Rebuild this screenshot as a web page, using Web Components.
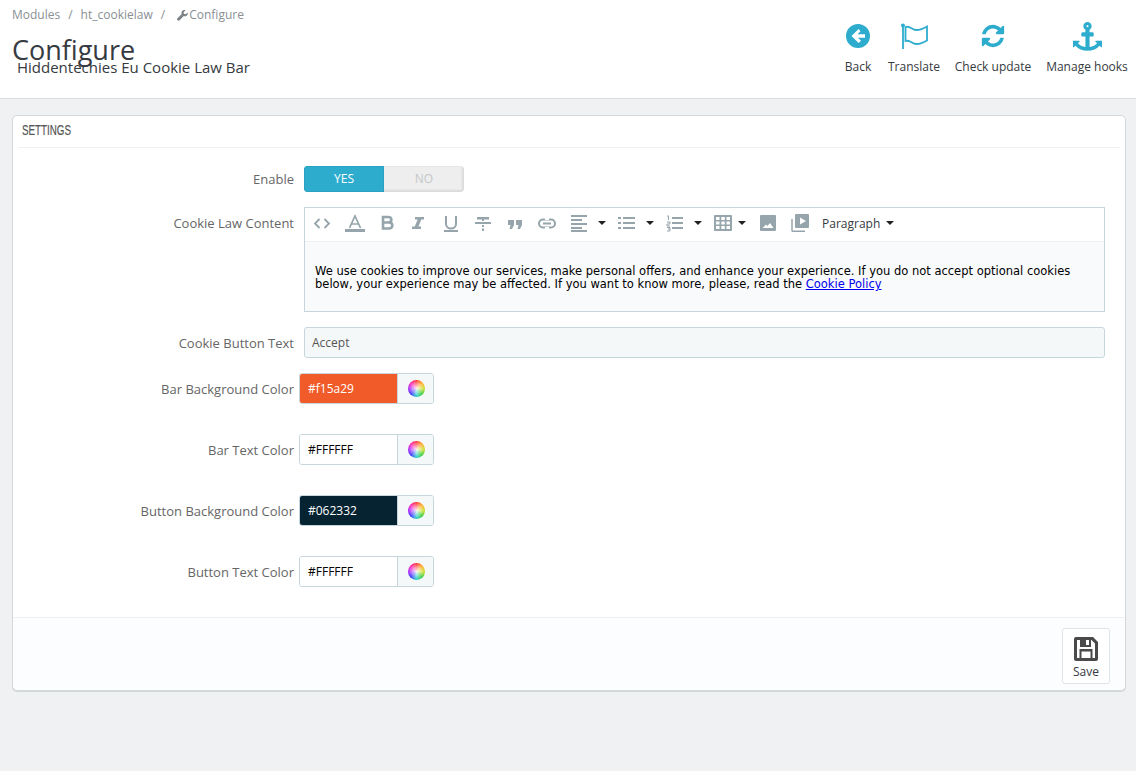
<!DOCTYPE html>
<html lang="en">
<head>
<meta charset="utf-8">
<title>Configure</title>
<style>
  html, body { margin: 0; padding: 0; }
  body {
    background: #eff1f2;
    font-family: "Open Sans", "Liberation Sans", sans-serif;
    font-size: 12px;
    color: #666;
    height: 771px;
    overflow: hidden;
  }
  .color-row { margin-bottom: 15px; }
</style>
</head>
<body>

<page-head>
  <tool-btn label="Back" style="width:52px">
    <svg width="24" height="24" viewBox="0 0 24 24"><path fill="#2eacce" fill-rule="evenodd" d="M12 0a12 12 0 1 1 0 24a12 12 0 0 1 0-24zM12.600 4.900L5.500 12l7.100 7.100l2.400-2.400l-3-3H19v-3.400h-7.500l3-3z"/></svg>
  </tool-btn>
  <tool-btn label="Translate" style="width:60px">
    <svg width="32" height="26" viewBox="0 0 32 26"><path fill="none" stroke="#2eacce" stroke-width="1.800" d="M7.500 4c5-1.500 6 3 11 3c4 0 8-2 10.500-3.500v14c-2.500 1.500-6.500 3.500-10.500 3.500c-5 0-6-4.500-11-3z"/><path fill="none" stroke="#2eacce" stroke-width="1.800" d="M5 2v24"/><circle cx="5" cy="2.500" r="2" fill="#2eacce"/></svg>
  </tool-btn>
  <tool-btn label="Check update" style="width:98px">
    <svg width="26" height="26" viewBox="0 0 1792 1792"><path fill="#2eacce" d="M1639 1056q0 5-1 7-64 268-268 434.500t-478 166.500q-146 0-282.500-55t-243.500-157l-129 129q-19 19-45 19t-45-19-19-45v-448q0-26 19-45t45-19h448q26 0 45 19t19 45-19 45l-137 137q71 66 161 102t187 36q134 0 250-65t186-179q11-17 53-117 8-23 30-23h192q13 0 22.500 9.500t9.500 22.500zm25-800v448q0 26-19 45t-45 19h-448q-26 0-45-19t-19-45 19-45l138-138q-148-137-349-137-134 0-250 65t-186 179q-11 17-53 117-8 23-30 23h-199q-13 0-22.500-9.500t-9.500-22.500v-7q65-268 270-434.500t480-166.500q146 0 284 55.500t245 156.500l130-129q19-19 45-19t45 19 19 45z"/></svg>
  </tool-btn>
  <tool-btn label="Manage hooks" style="width:90px">
    <svg width="29" height="29" viewBox="0 0 1792 1792"><path fill="#2eacce" d="M960 256q0-26-19-45t-45-19-45 19-19 45 19 45 45 19 45-19 19-45zm832 928v352q0 22-20 30-8 2-12 2-12 0-23-9l-93-93q-119 143-318.500 226.500t-429.500 83.500-429.500-83.500-318.500-226.500l-93 93q-9 9-23 9-4 0-12-2-20-8-20-30v-352q0-14 9-23t23-9h352q22 0 30 20 8 19-7 35l-100 100q67 91 189.500 153.500t271.500 82.500v-647h-192q-26 0-45-19t-19-45v-128q0-26 19-45t45-19h192v-163q-58-34-93-92.500t-35-128.500q0-106 75-181t181-75 181 75 75 181q0 70-35 128.500t-93 92.500v163h192q26 0 45 19t19 45v128q0 26-19 45t-45 19h-192v647q149-20 271.500-82.500t189.500-153.500l-100-100q-15-16-7-35 8-20 30-20h352q14 0 23 9t9 23z"/></svg>
  </tool-btn>
</page-head>

<settings-panel heading="SETTINGS">
  <form-row label="Enable" style="--label-top:4px"><yes-no-switch></yes-no-switch></form-row>
  <form-row label="Cookie Law Content"><rich-editor>
    We use cookies to improve our services, make personal offers, and enhance your experience. If you do not accept optional cookies below, your experience may be affected. If you want to know more, please, read the <a href="#" style="color:#00e">Cookie Policy</a>
  </rich-editor></form-row>
  <form-row label="Cookie Button Text"><text-field value="Accept"></text-field></form-row>
  <form-row class="color-row" label="Bar Background Color" style="--shift:-5px"><color-field value="#f15a29" bg="#f15a29" fg="#fff"></color-field></form-row>
  <form-row class="color-row" label="Bar Text Color" style="--shift:-5px"><color-field value="#FFFFFF" bg="#fff" fg="#000"></color-field></form-row>
  <form-row class="color-row" label="Button Background Color" style="--shift:-5px"><color-field value="#062332" bg="#062332" fg="#fff"></color-field></form-row>
  <form-row class="color-row" label="Button Text Color" style="--shift:-5px"><color-field value="#FFFFFF" bg="#fff" fg="#000"></color-field></form-row>
  <save-btn slot="footer"></save-btn>
</settings-panel>

<script>
class PageHead extends HTMLElement {
  connectedCallback() {
    this.attachShadow({ mode: 'open' });
    this.shadowRoot.innerHTML = `
      <style>
        :host { display: flex; justify-content: space-between; height: 98px; background: #fff; border-bottom: 1px solid #d9dcde; }
        .left { padding: 6px 0 0 12px; }
        .crumbs { display: flex; align-items: center; height: 17px; font-size: 12px; color: #8a8f93; }
        .crumbs i { font-style: normal; margin: 0 8px; color: #8a8f93; }
        .crumbs svg { margin: 1px 1px 0 4px; }
        h1 { margin: 10px 0 0; font-size: 27px; line-height: 34px; font-weight: 400; color: #363a41; }
        h4 { margin: -10px 0 0 5px; font-size: 15px; line-height: 20px; font-weight: 400; color: #363a41; }
        .tools { display: flex; align-items: flex-start; padding: 20px 4px 0 0; }
      </style>
      <div class="left">
        <div class="crumbs">
          <span>Modules</span><i>/</i><span>ht_cookielaw</span><i>/</i>
          <svg width="11" height="11" viewBox="0 0 11 11"><path fill="#7d8286" d="M10.600 2.400L8.700 4.300L7 3.800L6.600 2.200L8.600.3C7.300-.3 5.800.1 5 1.200c-.6.9-.7 1.800-.3 2.800L.5 8.200c-.6.6-.6 1.500 0 2.100s1.500.6 2.100 0L6.800 6.100c1 .4 2 .3 2.800-.3c1.100-.8 1.500-2.200 1-3.400z"/></svg>
          <span>Configure</span>
        </div>
        <h1>Configure</h1>
        <h4>Hiddentechies Eu Cookie Law Bar</h4>
      </div>
      <div class="tools"><slot></slot></div>`;
  }
}

class ToolBtn extends HTMLElement {
  connectedCallback() {
    this.attachShadow({ mode: 'open' });
    this.shadowRoot.innerHTML = `
      <style>
        :host { display: flex; flex-direction: column; align-items: center; font-size: 12px; color: #363a41; white-space: nowrap; }
        .ico { height: 32px; display: flex; align-items: center; justify-content: center; }
        span { margin-top: 6px; line-height: 17px; }
      </style>
      <div class="ico"><slot></slot></div>
      <span>${this.getAttribute('label')}</span>`;
  }
}

class SettingsPanel extends HTMLElement {
  connectedCallback() {
    this.attachShadow({ mode: 'open' });
    this.shadowRoot.innerHTML = `
      <style>
        :host { display: block; margin: 16px 10px 0 12px; background: #fff; border: 1px solid #d3d8db; border-radius: 5px; box-shadow: 0 1px 0 #d3d8db; }
        .head { margin: 0 5px; height: 31px; line-height: 29px; border-bottom: 1px solid #eef0f1; padding-left: 4px; }
        .head span { display: inline-block; font-family: "Liberation Sans", sans-serif; font-size: 14px; color: #555; -webkit-text-stroke: .2px #555; transform: scaleX(.7); transform-origin: left center; }
        .body { padding: 18px 0 15px; display: flex; flex-direction: column; gap: 15px; }
        .foot { height: 73px; border-top: 1px solid #eef0f1; background: #fcfdfe; border-radius: 0 0 5px 5px; display: flex; justify-content: flex-end; align-items: flex-start; padding: 10px 15px 0 0; box-sizing: border-box; }
      </style>
      <div class="head"><span>${this.getAttribute('heading')}</span></div>
      <div class="body"><slot></slot></div>
      <div class="foot"><slot name="footer"></slot></div>`;
  }
}

class FormRow extends HTMLElement {
  connectedCallback() {
    this.attachShadow({ mode: 'open' });
    this.shadowRoot.innerHTML = `
      <style>
        :host { display: grid; grid-template-columns: 281px 1fr; column-gap: 10px; padding-right: 20px; }
        label { text-align: right; font-size: 13px; line-height: 18px; color: #666; padding-top: var(--label-top, 7px); white-space: nowrap; }
        div { margin-left: var(--shift, 0); min-width: 0; }
      </style>
      <label>${this.getAttribute('label')}</label>
      <div><slot></slot></div>`;
  }
}

class YesNoSwitch extends HTMLElement {
  connectedCallback() {
    this.attachShadow({ mode: 'open' });
    this.shadowRoot.innerHTML = `
      <style>
        :host { display: flex; width: 160px; height: 26px; font-size: 12px; line-height: 26px; text-align: center; border-radius: 4px; overflow: hidden; }
        .yes { flex: 1; background: #2eacce; color: #fff; box-shadow: inset 0 0 0 1px #2aa0c0; }
        .no { flex: 1; background: #eee; color: #c4c7c9; box-shadow: inset 0 1px 0 #e4e5e6, inset -2px -2px 2px #d9dadb; }
      </style>
      <div class="yes">YES</div><div class="no">NO</div>`;
  }
}

const G = '#95a5ab';
const icon = (w, gap, d) => `<svg width="${w}" height="18" viewBox="0 0 ${w} 18" style="margin-left:${gap}px">${d}</svg>`;
const caret = (gap) => icon(8, gap, `<path fill="#222" d="M0 7h8l-4 4z"/>`);
const st = `fill="none" stroke="${G}"`;

class RichEditor extends HTMLElement {
  connectedCallback() {
    this.attachShadow({ mode: 'open' });
    this.shadowRoot.innerHTML = `
      <style>
        :host { display: block; height: 105px; box-sizing: border-box; border: 1px solid #c7d6dd; background: #f9fafb; }
        .bar { height: 34px; background: #fff; border-bottom: 1px solid #eef1f3; display: flex; align-items: center; padding: 0 0 3px 0; box-sizing: border-box; }
        .bar svg { display: block; flex: none; }
        .fmt { font-size: 12px; color: #363a41; display: flex; align-items: center; margin-left: 13px; }
        .text { padding: 23px 10px 0; font-family: "DejaVu Sans", Verdana, sans-serif; font-size: 11.500px; line-height: 13px; color: #000; }
      </style>
      <div class="bar">
        ${icon(18, 8, `<path ${st} stroke-width="1.800" d="M6.500 5L2 9.500L6.500 14M11.500 5L16 9.500L11.500 14"/>`)}
        ${icon(20, 14, `<path ${st} stroke-width="1.700" d="M4.500 14L10 2l5.500 12M6.500 10h7"/><rect y="15" width="20" height="3" fill="${G}"/>`)}
        ${icon(18, 13, `<path ${st} stroke-width="2.600" d="M5 3h5c4.500 0 4.500 5.500 0 5.500H5V3zM5 8.500h6c4.500 0 4.500 6 0 6H5z"/>`)}
        ${icon(18, 13, `<path fill="${G}" d="M6 3h9v2.500h-2.700L9.500 12.500H12V15H3v-2.500h2.800L8.600 5.500H6z"/>`)}
        ${icon(18, 15, `<path ${st} stroke-width="2" d="M4 2v8c0 6 10 6 10 0V2"/><rect x="2" y="16" width="14" height="2" fill="${G}"/>`)}
        ${icon(18, 14, `<path fill="${G}" d="M1 8h16v2H1zM3 3h12v2.500h-5V7H8V5.500H3zM8 11h2v2H8zM8 14.500h2V17H8z"/>`)}
        ${icon(18, 14, `<path fill="${G}" d="M2 6h6v5l-2 4H3.500l1-4H2zM10 6h6v5l-2 4h-2.500l1-4H10z"/>`)}
        ${icon(18, 14, `<rect ${st} stroke-width="2" x="1" y="5.500" width="16" height="8" rx="4"/><path fill="#fff" d="M7 4h4v2H7zM7 13h4v2H7z"/><path stroke="${G}" stroke-width="2" d="M5 9.500h8"/>`)}
        ${icon(16, 15, `<path fill="${G}" d="M0 1h16v2H0zM0 5h11v2H0zM0 9h16v2H0zM0 13h11v2H0zM0 16h16v2H0z"/>`)}
        ${caret(11)}
        ${icon(17, 12, `<path fill="${G}" d="M5 3h12v2H5zM5 8h12v2H5zM5 13h12v2H5zM0 3h3v2H0zM0 8h3v2H0zM0 13h3v2H0z"/>`)}
        ${caret(11)}
        ${icon(17, 12, `<path fill="${G}" d="M6 3h11v2H6zM6 8h11v2H6zM6 13h11v2H6z"/><path ${st} stroke-width="1" d="M1 2h1.500v4M1 8h3v2H1v2h3M1 13.500h3v3.500H1M2 15h2"/>`)}
        ${caret(11)}
        ${icon(18, 12, `<path fill="${G}" fill-rule="evenodd" d="M1 1h16a1 1 0 0 1 1 1v14a1 1 0 0 1-1 1H1a1 1 0 0 1-1-1V2a1 1 0 0 1 1-1zM2 3v3h3.500V3zM7.300 3v3h3.500V3zM12.500 3v3H16V3zM2 7.500v3h3.500v-3zM7.300 7.500v3h3.500v-3zM12.500 7.500v3H16v-3zM2 12v3h3.500v-3zM7.300 12v3h3.500v-3zM12.500 12v3H16v-3z"/>`)}
        ${caret(6)}
        ${icon(16, 14, `<path fill="${G}" fill-rule="evenodd" d="M1 1h14a1 1 0 0 1 1 1v14a1 1 0 0 1-1 1H1a1 1 0 0 1-1-1V2a1 1 0 0 1 1-1zM2.500 14h11l-3.500-5l-2.500 3l-1.500-1.500z"/>`)}
        ${icon(18, 15, `<path fill="${G}" fill-rule="evenodd" d="M5 0h12a1 1 0 0 1 1 1v12a1 1 0 0 1-1 1H5a1 1 0 0 1-1-1V1a1 1 0 0 1 1-1zM9 3.500v7l6-3.500z"/><path ${st} stroke-width="1.500" d="M1 5v11.500a1 1 0 0 0 1 .7h12"/>`)}
        <div class="fmt">Paragraph${caret(6)}</div>
      </div>
      <div class="text"><slot></slot></div>`;
  }
}

class TextField extends HTMLElement {
  connectedCallback() {
    this.attachShadow({ mode: 'open' });
    this.shadowRoot.innerHTML = `
      <style>
        :host { display: block; height: 31px; box-sizing: border-box; padding-left: 7px; line-height: 29px; font-size: 12px; color: #555; background: #f5f8f9; border: 1px solid #c7d6dd; border-radius: 3px; }
      </style>${this.getAttribute('value')}`;
  }
}

class ColorField extends HTMLElement {
  connectedCallback() {
    this.attachShadow({ mode: 'open' });
    this.shadowRoot.innerHTML = `
      <style>
        :host { display: flex; width: 135px; height: 31px; box-sizing: border-box; border: 1px solid #c7d6dd; border-radius: 3px; overflow: hidden; font-size: 12px; }
        .val { width: 98px; padding-left: 8px; box-sizing: border-box; line-height: 29px; border-right: 1px solid #c7d6dd; }
        .pick { flex: 1; background: #f5f8f9; display: flex; align-items: center; justify-content: center; padding-left: 2px; }
        .wheel { position: relative; width: 17px; height: 17px; border-radius: 50%; background: conic-gradient(#f33, #fa2, #cd2, #3c3, #2cc, #33f, #a2f, #f2a, #f33); }
        .wheel::after { content: ""; position: absolute; inset: 0; border-radius: 50%; background: radial-gradient(circle, rgba(255,255,255,.9) 0, rgba(255,255,255,.45) 38%, rgba(255,255,255,0) 70%); }
      </style>
      <div class="val" style="background:${this.getAttribute('bg')};color:${this.getAttribute('fg')}">${this.getAttribute('value')}</div>
      <div class="pick"><div class="wheel"></div></div>`;
  }
}

class SaveBtn extends HTMLElement {
  connectedCallback() {
    this.attachShadow({ mode: 'open' });
    this.shadowRoot.innerHTML = `
      <style>
        :host { display: flex; flex-direction: column; align-items: center; width: 48px; height: 56px; box-sizing: border-box; padding-top: 8px; background: #fff; border: 1px solid #dfe3e5; border-radius: 3px; font-size: 12px; color: #363a41; }
        span { line-height: 16px; margin-top: 3px; }
      </style>
      <svg width="24" height="24" viewBox="0 0 24 24"><path fill="#4a4a4a" fill-rule="evenodd" d="M2 0h17l5 5v17a2 2 0 0 1-2 2H2a2 2 0 0 1-2-2V2a2 2 0 0 1 2-2zM3 3v18h2.500v-9h13v9H21V6.500L17.500 3H17v7H6V3zM7.500 14.500V21h9v-6.500zM12 3v5h3V3z"/></svg>
      <span>Save</span>`;
  }
}

customElements.define('page-head', PageHead);
customElements.define('tool-btn', ToolBtn);
customElements.define('settings-panel', SettingsPanel);
customElements.define('form-row', FormRow);
customElements.define('yes-no-switch', YesNoSwitch);
customElements.define('rich-editor', RichEditor);
customElements.define('text-field', TextField);
customElements.define('color-field', ColorField);
customElements.define('save-btn', SaveBtn);
</script>
</body>
</html>
